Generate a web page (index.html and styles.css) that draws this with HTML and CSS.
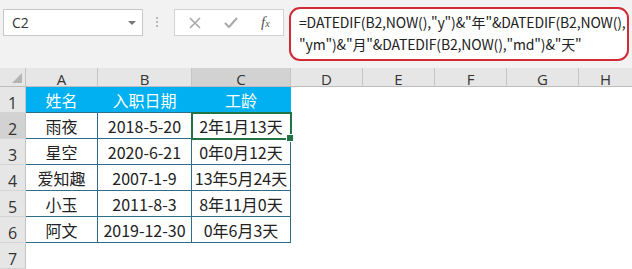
FILE: index.html
```html
<!DOCTYPE html>
<html lang="zh">
<head>
<meta charset="utf-8">
<link rel="stylesheet" href="styles.css">
</head>
<body>
<div class="toolbar">
  <div class="namebox"><span>C2</span><span class="arrow"></span></div>
  <div class="dots"><i></i><i></i><i></i></div>
  <div class="fxbox">
    <svg class="ic" width="14" height="14" viewBox="0 0 14 14"><path d="M2 2 L12 12 M12 2 L2 12" stroke="#a8a8a8" stroke-width="1.6" fill="none"/></svg>
    <svg class="ic" width="16" height="14" viewBox="0 0 16 14"><path d="M2 7 L6 11 L14 2" stroke="#a8a8a8" stroke-width="2" fill="none"/></svg>
    <span class="fx">f<sub>x</sub></span>
  </div>
  <div class="formula">=DATEDIF(B2,NOW(),"y")&amp;"年"&amp;DATEDIF(B2,NOW(),<br>"ym")&amp;"月"&amp;DATEDIF(B2,NOW(),"md")&amp;"天"</div>
</div>
<div class="sheet">
  <div class="corner"><span class="tri"></span></div>
  <div class="ch">A</div><div class="ch">B</div><div class="ch sel">C</div><div class="ch">D</div><div class="ch">E</div><div class="ch">F</div><div class="ch">G</div><div class="ch last">H</div>

  <div class="rh">1</div>
  <div class="c hd">姓名</div><div class="c hd">入职日期</div><div class="c hd">工龄</div><div class="e"></div><div class="e"></div><div class="e"></div><div class="e"></div><div class="e"></div>

  <div class="rh sel">2</div>
  <div class="c">雨夜</div><div class="c">2018-5-20</div><div class="c active">2年1月13天<span class="handle"></span></div><div class="e"></div><div class="e"></div><div class="e"></div><div class="e"></div><div class="e"></div>

  <div class="rh">3</div>
  <div class="c">星空</div><div class="c">2020-6-21</div><div class="c">0年0月12天</div><div class="e"></div><div class="e"></div><div class="e"></div><div class="e"></div><div class="e"></div>

  <div class="rh">4</div>
  <div class="c">爱知趣</div><div class="c">2007-1-9</div><div class="c">13年5月24天</div><div class="e"></div><div class="e"></div><div class="e"></div><div class="e"></div><div class="e"></div>

  <div class="rh">5</div>
  <div class="c">小玉</div><div class="c">2011-8-3</div><div class="c">8年11月0天</div><div class="e"></div><div class="e"></div><div class="e"></div><div class="e"></div><div class="e"></div>

  <div class="rh">6</div>
  <div class="c">阿文</div><div class="c">2019-12-30</div><div class="c">0年6月3天</div><div class="e"></div><div class="e"></div><div class="e"></div><div class="e"></div><div class="e"></div>

  <div class="rh">7</div>
  <div class="e"></div><div class="e"></div><div class="e"></div><div class="e"></div><div class="e"></div><div class="e"></div><div class="e"></div><div class="e"></div>
</div>
</body>
</html>
```
FILE: styles.css
```css
html, body {
  margin: 0;
  padding: 0;
  background: #ffffff;
}
body {
  width: 632px;
  height: 269px;
  overflow: hidden;
  font-family: "Noto Sans CJK SC", "Noto Sans", sans-serif;
}
.toolbar {
  height: 68px;
  background: #f2f2f2;
  display: flex;
  align-items: flex-start;
  box-sizing: border-box;
}
.namebox {
  margin: 9px 0 0 3px;
  width: 140px;
  height: 27px;
  box-sizing: border-box;
  background: #fff;
  border: 1px solid #c8c8c8;
  display: flex;
  align-items: center;
  justify-content: space-between;
  padding: 0 6px 0 8px;
  font-family: "Open Sans", "Liberation Sans", sans-serif;
  font-size: 14px;
  color: #333;
}
.arrow {
  width: 0;
  height: 0;
  border-left: 4px solid transparent;
  border-right: 4px solid transparent;
  border-top: 4px solid #777;
}
.dots {
  margin: 17px 0 0 13px;
  width: 4px;
  display: flex;
  flex-direction: column;
  gap: 2px;
}
.dots i {
  display: block;
  width: 2px;
  height: 2px;
  background: #b8b8b8;
}
.fxbox {
  margin: 9px 0 0 14px;
  width: 110px;
  height: 27px;
  box-sizing: border-box;
  background: #fff;
  border: 1px solid #d2d2d2;
  display: flex;
  align-items: center;
  padding-left: 13px;
  gap: 21px;
}
.fx {
  font-family: "Liberation Serif", serif;
  font-style: italic;
  font-size: 15px;
  color: #555;
  margin-left: 1px;
}
.fx sub {
  font-size: 10px;
  vertical-align: 0;
}
.formula {
  margin: 7px 0 0 5px;
  width: 340px;
  height: 54px;
  box-sizing: border-box;
  background: #fff;
  border: 2px solid #d22b36;
  border-radius: 11px;
  padding: 2px 0 0 8px;
  font-size: 14px;
  line-height: 22px;
  color: #222;
  white-space: nowrap;
  letter-spacing: -0.15px;
}
.sheet {
  display: grid;
  grid-template-columns: 26px 72px 94px 99px 72px 72px 72px 72px 53px;
  grid-template-rows: 19px repeat(7, 26px);
}
.corner {
  background: #e6e6e6;
  border-right: 1px solid #c4c4c4;
  border-bottom: 1px solid #bdbdbd;
  box-sizing: border-box;
  position: relative;
}
.tri {
  position: absolute;
  right: 3px;
  bottom: 3px;
  width: 0;
  height: 0;
  border-left: 10px solid transparent;
  border-bottom: 10px solid #b4b4b4;
}
.ch {
  background: #e6e6e6;
  border-right: 1px solid #c4c4c4;
  border-bottom: 1px solid #bdbdbd;
  box-sizing: border-box;
  text-align: center;
  font-family: "Open Sans", "Liberation Sans", sans-serif;
  font-size: 15px;
  line-height: 23px;
  color: #333;
}
.ch.sel {
  background: #d2d2d2;
}
.ch.last {
  border-right: none;
}
.rh {
  grid-column: 1;
  background: #e6e6e6;
  border-right: 1px solid #c4c4c4;
  border-bottom: 1px solid #d4d4d4;
  box-sizing: border-box;
  text-align: center;
  font-family: "Open Sans", "Liberation Sans", sans-serif;
  font-size: 16px;
  line-height: 33px;
  color: #333;
}
.rh.sel {
  background: #d2d2d2;
}
.c {
  box-sizing: border-box;
  border-right: 1px solid #2f6c89;
  border-bottom: 1px solid #2f6c89;
  text-align: center;
  font-size: 16px;
  line-height: 27px;
  color: #222;
  position: relative;
}
.c.hd {
  background: #00b0f0;
  color: #fff;
  border-right-color: #00b0f0;
  border-bottom-color: #2f6c89;
}
.c.active {
  outline: 2px solid #217346;
  outline-offset: -1px;
  z-index: 1;
}
.handle {
  position: absolute;
  right: -4px;
  bottom: -4px;
  width: 6px;
  height: 6px;
  background: #217346;
  border: 1px solid #fff;
}
.e {
  background: #fff;
}
```
